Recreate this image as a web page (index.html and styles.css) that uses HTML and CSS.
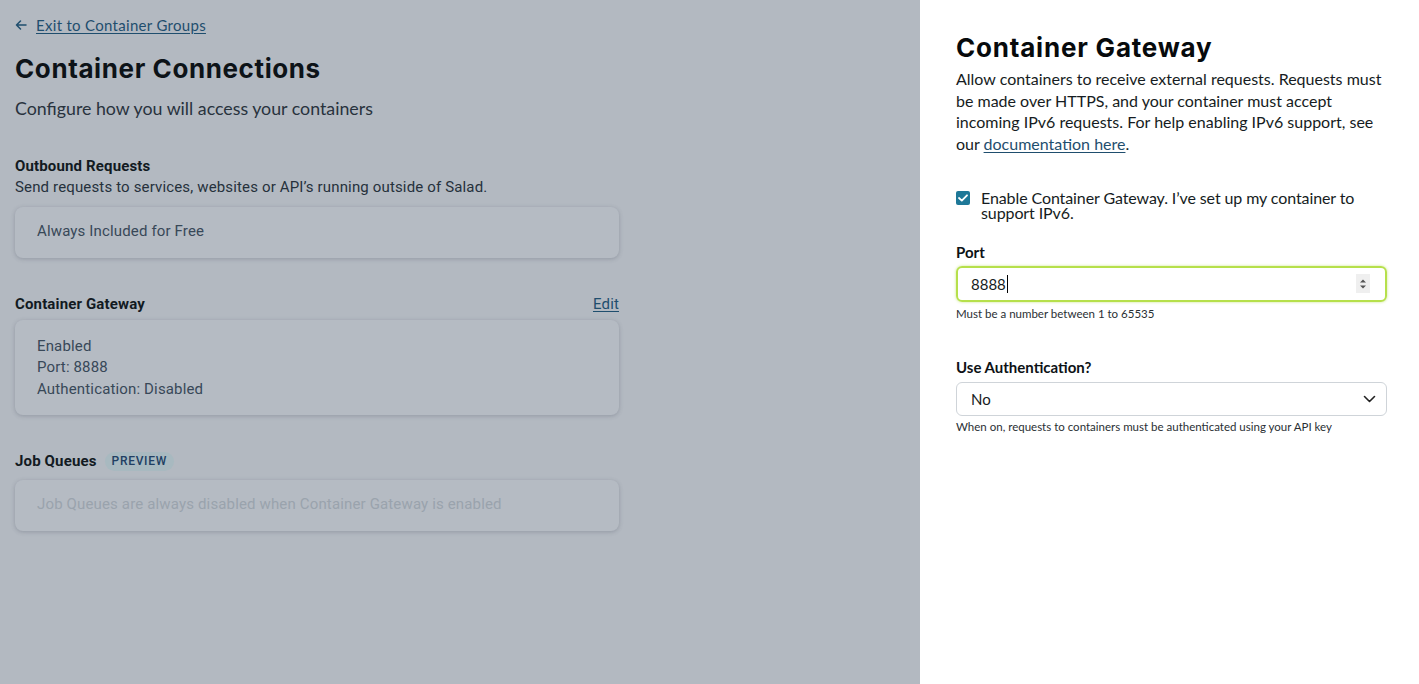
FILE: index.html
```html
<!DOCTYPE html>
<html lang="en">
<head>
<meta charset="utf-8">
<title>Container Connections</title>
<link rel="stylesheet" href="styles.css">
</head>
<body>
<div class="page">
  <main class="left">
    <div class="left-inner">
      <a class="back" href="#">
        <svg class="back-arrow" width="12" height="10" viewBox="0 0 12 10" aria-hidden="true"><path d="M11 5H1.5M5.5 1L1.5 5l4 4" fill="none" stroke="#1f4e6e" stroke-width="1.5" stroke-linecap="round" stroke-linejoin="round"/></svg>
        <span class="back-text">Exit to Container Groups</span>
      </a>
      <h1 class="title">Container Connections</h1>
      <p class="subtitle">Configure how you will access your containers</p>

      <section class="section first">
        <h2 class="section-title">Outbound Requests</h2>
        <p class="section-desc">Send requests to services, websites or API’s running outside of Salad.</p>
        <div class="card"><p class="card-line">Always Included for Free</p></div>
      </section>

      <section class="section">
        <div class="section-head">
          <h2 class="section-title">Container Gateway</h2>
          <a class="edit" href="#">Edit</a>
        </div>
        <div class="card tall">
          <p class="card-line">Enabled</p>
          <p class="card-line">Port: 8888</p>
          <p class="card-line">Authentication: Disabled</p>
        </div>
      </section>

      <section class="section">
        <div class="section-head start">
          <h2 class="section-title">Job Queues</h2>
          <span class="badge">PREVIEW</span>
        </div>
        <div class="card"><p class="card-line muted">Job Queues are always disabled when Container Gateway is enabled</p></div>
      </section>
    </div>
  </main>

  <aside class="right">
    <h2 class="panel-title">Container Gateway</h2>
    <p class="panel-desc">Allow containers to receive external requests. Requests must be made over HTTPS, and your container must accept incoming IPv6 requests. For help enabling IPv6 support, see our <a href="#" class="doc-link">documentation here</a>.</p>

    <label class="check">
      <span class="box"><svg width="10" height="8" viewBox="0 0 10 8" aria-hidden="true"><path d="M1 4l2.8 2.6L9 1.3" fill="none" stroke="#fff" stroke-width="1.8" stroke-linecap="round" stroke-linejoin="round"/></svg></span>
      <span class="check-text">Enable Container Gateway. I’ve set up my container to support IPv6.</span>
    </label>

    <div class="field">
      <div class="field-label">Port</div>
      <div class="input focused">
        <span class="input-value">8888</span><span class="caret"></span>
        <span class="spinner"><svg width="8" height="12" viewBox="0 0 8 12" aria-hidden="true"><path d="M1 4.5L4 1.5l3 3z M1 7.5L4 10.5l3-3z" fill="#555"/></svg></span>
      </div>
      <div class="hint">Must be a number between 1 to 65535</div>
    </div>

    <div class="field second">
      <div class="field-label">Use Authentication?</div>
      <div class="input select">
        <span class="input-value">No</span>
        <svg class="chevron" width="13" height="8" viewBox="0 0 13 8" aria-hidden="true"><path d="M1.5 1.5l5 5 5-5" fill="none" stroke="#222" stroke-width="1.6" stroke-linecap="round" stroke-linejoin="round"/></svg>
      </div>
      <div class="hint">When on, requests to containers must be authenticated using your API key</div>
    </div>
  </aside>
</div>
</body>
</html>
```
FILE: styles.css
```css
* { box-sizing: border-box; }
html, body { margin: 0; padding: 0; height: 100%; }
body { font-family: Lato, "Noto Sans", sans-serif; }
p, h1, h2 { margin: 0; }
a { color: inherit; }

.page { display: flex; height: 684px; overflow: hidden; }

.left { width: 920px; background: #b3b9c1; padding: 15px 0 0 15px; }
.left-inner { width: 604px; display: flex; flex-direction: column; }

.back { display: flex; align-items: center; gap: 9px; color: #1f4e6e; text-decoration: none; font-family: Lato, sans-serif; font-size: 15px; line-height: 20px; letter-spacing: 0.3px; }
.back-text { text-decoration: underline; text-underline-offset: 2px; }

.title { margin-top: 17px; font-family: Inter, sans-serif; font-weight: 700; font-size: 26px; line-height: 34px; color: #0d1318; letter-spacing: 0.6px; }
.subtitle { margin-top: 11px; font-size: 17.8px; line-height: 22px; color: #28323d; }

.section { margin-top: 36px; display: flex; flex-direction: column; }
.section.first { margin-top: 37px; }
.section-title { font-family: Roboto, sans-serif; font-weight: 700; font-size: 15px; line-height: 20px; color: #121a22; letter-spacing: 0.15px; }
.section-desc { font-family: Roboto, sans-serif; font-size: 15px; line-height: 20px; color: #26313c; letter-spacing: 0.15px; margin-top: 1px; }
.section-head { display: flex; justify-content: space-between; align-items: center; height: 20px; }
.section-head.start { justify-content: flex-start; gap: 8px; }
.edit { font-family: Roboto, sans-serif; font-size: 15px; color: #1f4e6e; text-decoration: underline; text-underline-offset: 2px; letter-spacing: 0.15px; }

.badge { font-family: Roboto, sans-serif; font-size: 12px; font-weight: 500; letter-spacing: 0.7px; color: #213f63; background: #a8b9c0; border-radius: 10px; padding: 0 7px; line-height: 19px; height: 19px; }

.card { margin-top: 10px; background: #b5bbc3; border-radius: 8px; box-shadow: 0 1px 4px rgba(60, 70, 85, 0.28); padding: 14px 22px 15px; }
.section-head + .card { margin-top: 6px; }
.section-head.start + .card { margin-top: 9px; }
.card.tall { padding: 16px 22px 15px; }
.card-line { font-family: Roboto, sans-serif; font-size: 15px; line-height: 21.5px; color: #384858; letter-spacing: 0.15px; }
.card-line.muted { color: #9aa3ad; }

.right { flex: 1; background: #fff; padding: 31px 32px 0 36px; }
.panel-title { font-family: Inter, sans-serif; font-weight: 700; font-size: 26px; line-height: 34px; color: #070a0c; letter-spacing: 0.8px; }
.panel-desc { margin-top: 3px; font-size: 16px; line-height: 21.7px; color: #161c22; }
.doc-link { color: #1f4e6e; text-decoration: underline; text-underline-offset: 2px; }

.check { margin-top: 31px; display: flex; align-items: flex-start; gap: 11px; }
.box { width: 14px; height: 14px; border-radius: 2px; background: #1e7898; display: flex; align-items: center; justify-content: center; flex: none; margin-top: 5px; }
.check-text { font-size: 16px; line-height: 15px; color: #161c22; padding-top: 4px; letter-spacing: -0.1px; }

.field { margin-top: 22px; display: flex; flex-direction: column; }
.field.second { margin-top: 36px; }
.field-label { font-weight: 700; font-size: 15px; line-height: 20px; color: #0d1216; }
.input { margin-top: 4px; height: 36px; flex: none; border: 1px solid #cfd4d9; border-radius: 6px; display: flex; align-items: center; padding: 0 14px; position: relative; }
.input.focused { border: 2px solid #b6e04b; box-shadow: 0 0 3px rgba(170, 215, 60, 0.6); padding: 0 13px; }
.input.select { height: 34px; margin-top: 5px; }
.input-value { font-size: 15px; color: #161c22; }
.caret { width: 1px; height: 18px; background: #000; margin-left: 1px; }
.spinner { margin-left: auto; width: 14px; height: 19px; background: #efefef; display: flex; align-items: center; justify-content: center; margin-right: 2px; }
.chevron { margin-left: auto; margin-right: -4px; }
.hint { margin-top: 5px; font-size: 11.5px; line-height: 14px; color: #2a2f34; }
.field.second .hint { margin-top: 4px; }
```
